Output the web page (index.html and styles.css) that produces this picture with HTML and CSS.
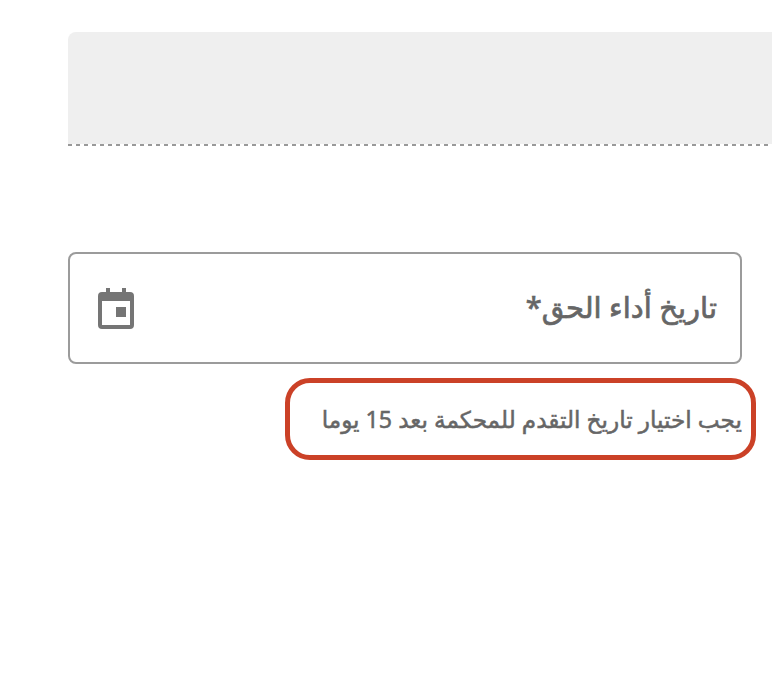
FILE: index.html
```html
<!DOCTYPE html>
<html lang="ar">
<head>
<meta charset="utf-8">
<title>تاريخ أداء الحق</title>
<link rel="stylesheet" href="styles.css">
</head>
<body>
<main class="page">
  <div class="panel"></div>
  <div class="form">
    <div class="field" dir="rtl">
      <span class="label">تاريخ أداء الحق*</span>
      <svg class="cal" viewBox="0 0 36 41" aria-hidden="true">
        <path fill-rule="evenodd" d="M8 0h4v4h12V0h4v4h4a4 4 0 0 1 4 4v29a4 4 0 0 1-4 4H4a4 4 0 0 1-4-4V8a4 4 0 0 1 4-4h4zM4 13v24h28V13z"/>
        <rect x="18" y="19" width="10" height="10"/>
      </svg>
    </div>
    <div class="note" dir="rtl">يجب اختيار تاريخ التقدم للمحكمة بعد 15 يوما</div>
  </div>
</main>
</body>
</html>
```
FILE: styles.css
```css
* { box-sizing: border-box; }
html, body { margin: 0; background: #fff; }
body { overflow: hidden; height: 693px; font-family: "Noto Sans", "DejaVu Sans", "Liberation Sans", sans-serif; }
.page { padding: 32px 0 0 68px; }
.panel {
  height: 114px;
  padding-bottom: 2px;
  background:
    repeating-linear-gradient(90deg, #999 0 4px, transparent 4px 8px) left bottom / 100% 2px no-repeat,
    linear-gradient(#efefef, #efefef) left top / 100% 112px no-repeat;
  border-top-left-radius: 8px;
}
.form { width: 688px; margin-top: 106px; display: flex; flex-direction: column; }
.field {
  width: 674px;
  height: 112px;
  border: 2px solid #9b9b9b;
  border-radius: 8px;
  display: flex;
  align-items: center;
  justify-content: space-between;
  padding: 0 23px 0 28px;
}
.label { font-size: 29px; font-weight: 400; color: #666; -webkit-text-stroke: 0.7px #666; line-height: 40px; margin-top: -2px; }
.cal { width: 36px; height: 41px; fill: #757575; }
.note {
  align-self: flex-end;
  margin-top: 14px;
  width: 471px;
  height: 82px;
  border: 5px solid #cb4127;
  border-radius: 25px;
  display: flex;
  align-items: center;
  padding: 0 9px;
  font-size: 23.2px;
  font-weight: 400;
  color: #666;
  -webkit-text-stroke: 0.5px #666;
}
```
